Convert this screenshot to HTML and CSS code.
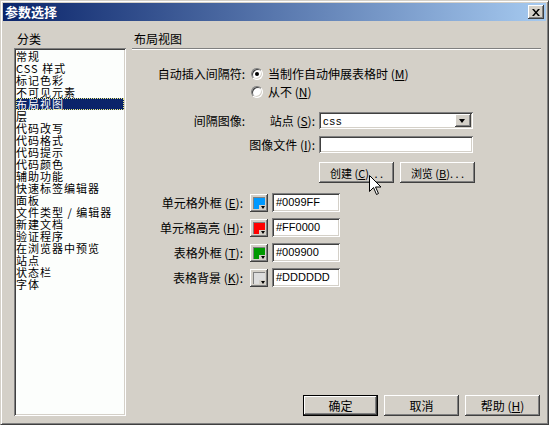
FILE: index.html
```html
<!DOCTYPE html>
<html lang="zh-CN">
<head>
  <meta charset="UTF-8">
  <title>参数选择</title>
  <link rel="stylesheet" href="styles.css">
</head>
<body>
  <div class="window">
    <div class="titlebar">
      <span class="title">参数选择</span>
      <span class="close">
        <svg width="8" height="7" viewBox="0 0 8 7"><path d="M0 0h2l2 2.5 2-2.5h2l-3 3.5 3 3.5h-2l-2-2.5-2 2.5h-2l3-3.5z" fill="#000"/></svg>
      </span>
    </div>

    <div class="body">
      <div class="category">
        <div class="cat-caption">分类</div>
        <ul class="list">
          <li>常规</li>
          <li>CSS 样式</li>
          <li>标记色彩</li>
          <li>不可见元素</li>
          <li class="selected">布局视图</li>
          <li>层</li>
          <li>代码改写</li>
          <li>代码格式</li>
          <li>代码提示</li>
          <li>代码颜色</li>
          <li>辅助功能</li>
          <li>快速标签编辑器</li>
          <li>面板</li>
          <li>文件类型 / 编辑器</li>
          <li>新建文档</li>
          <li>验证程序</li>
          <li>在浏览器中预览</li>
          <li>站点</li>
          <li>状态栏</li>
          <li>字体</li>
        </ul>
      </div>

      <div class="panel">
        <div class="panel-caption">布局视图</div>
        <div class="rule"></div>

        <div class="row row-first">
          <span class="label">自动插入间隔符:</span>
          <span class="radio checked"></span>
          <span>当制作自动伸展表格时 (<u>M</u>)</span>
        </div>
        <div class="row row-next">
          <span class="label"></span>
          <span class="radio"></span>
          <span>从不 (<u>N</u>)</span>
        </div>

        <div class="row row-site">
          <span class="label">间隔图像:</span>
          <span class="sublabel">站点 (<u>S</u>):</span>
          <div class="select field">
            <span class="value">css</span>
            <span class="drop"></span>
          </div>
        </div>
        <div class="row row-file">
          <span class="label label-wide">图像文件 (<u>I</u>):</span>
          <div class="text field"></div>
        </div>
        <div class="row row-buttons">
          <button class="btn btn-small">创建 (<u>C</u>). . .</button>
          <button class="btn btn-small">浏览 (<u>B</u>). . .</button>
          <svg class="cursor" width="12" height="20" viewBox="0 0 12 20"><path d="M0.5 0.5v16l4-4 3 7 2-1-3-6.5h5.5z" fill="#fff" stroke="#000"/></svg>
        </div>

        <div class="row color-row color-first">
          <span class="label label-color">单元格外框 (<u>E</u>):</span>
          <span class="swatch"><span class="chip" style="background:#0099ff"></span></span>
          <div class="hex field">#0099FF</div>
        </div>
        <div class="row color-row">
          <span class="label label-color">单元格高亮 (<u>H</u>):</span>
          <span class="swatch"><span class="chip" style="background:#ff0000"></span></span>
          <div class="hex field">#FF0000</div>
        </div>
        <div class="row color-row">
          <span class="label label-color">表格外框 (<u>T</u>):</span>
          <span class="swatch"><span class="chip" style="background:#009900"></span></span>
          <div class="hex field">#009900</div>
        </div>
        <div class="row color-row">
          <span class="label label-color">表格背景 (<u>K</u>):</span>
          <span class="swatch"><span class="chip" style="background:#dddddd"></span></span>
          <div class="hex field">#DDDDDD</div>
        </div>

        <div class="actions">
          <button class="btn btn-default">确定</button>
          <button class="btn">取消</button>
          <button class="btn">帮助 (<u>H</u>)</button>
        </div>
      </div>
    </div>
  </div>
</body>
</html>
```

FILE: styles.css
```css
* {
  box-sizing: border-box;
}
body {
  margin: 0;
  background-color: #d4d0c8;
  font-family: "Noto Sans CJK SC", sans-serif;
  font-size: 12px;
  line-height: 12px;
  color: #000;
}
u {
  text-decoration: underline;
}
.window {
  width: 549px;
  height: 425px;
  border: 1px solid;
  border-color: #d4d0c8 #404040 #404040 #d4d0c8;
  box-shadow: inset 1px 1px #fff, inset -1px -1px #808080;
  padding: 2px;
  display: flex;
  flex-direction: column;
}
.titlebar {
  height: 18px;
  flex: none;
  display: flex;
  align-items: center;
  padding: 0 2px;
  background: linear-gradient(to right, #0a246a, #a6caf0);
  color: #fff;
  font-weight: bold;
  font-size: 13px;
}
.title {
  flex: 1;
  line-height: 18px;
}
.close {
  width: 16px;
  height: 14px;
  display: flex;
  align-items: center;
  justify-content: center;
  background-color: #d4d0c8;
  box-shadow: inset -1px -1px #404040, inset 1px 1px #fff, inset -2px -2px #808080;
}
.body {
  flex: 1;
  display: flex;
  gap: 6px;
  padding: 12px 5px 6px 11px;
}

/* category list */
.category {
  width: 112px;
  flex: none;
  display: flex;
  flex-direction: column;
}
.cat-caption {
  height: 12px;
  padding-left: 3px;
  margin-bottom: 3px;
}
.list {
  flex: 1;
  margin: 0;
  padding: 2px;
  list-style: none;
  background-color: #fcfefc;
  box-shadow: inset 1px 1px #808080, inset -1px -1px #fff, inset 2px 2px #404040, inset -2px -2px #d4d0c8;
}
.list li {
  height: 12px;
  font-size: 11px;
  line-height: 12px;
  letter-spacing: 1px;
  white-space: nowrap;
}
.list li.selected {
  background-color: #0a246a;
  color: #fff;
  outline: 1px dotted #f0f080;
  outline-offset: -1px;
}

/* right panel */
.panel {
  flex: 1;
  display: flex;
  flex-direction: column;
}
.panel-caption {
  height: 12px;
  padding-left: 2px;
  margin-bottom: 3px;
}
.rule {
  height: 2px;
  border-top: 1px solid #808080;
  border-bottom: 1px solid #fff;
}
.row {
  display: flex;
  align-items: center;
  white-space: nowrap;
}
.label {
  width: 113px;
  flex: none;
  text-align: right;
  margin-right: 6px;
}
.label-wide {
  width: 183px;
  margin-right: 4px;
}
.label-color {
  width: 113px;
  padding-right: 2px;
  margin-right: 5px;
}
.sublabel {
  width: 64px;
  flex: none;
  text-align: right;
  margin-right: 4px;
}
.row-first {
  height: 12px;
  margin-top: 18px;
}
.row-next {
  height: 12px;
  margin-top: 6px;
}
.row-site {
  height: 17px;
  margin-top: 14px;
}
.row-file {
  height: 17px;
  margin-top: 7px;
}
.row-buttons {
  position: relative;
  margin-top: 9px;
  padding-left: 187px;
  gap: 6px;
}
.color-row {
  height: 19px;
  margin-top: 6px;
}
.color-first {
  margin-top: 10px;
}

.radio {
  width: 12px;
  height: 12px;
  flex: none;
  position: relative;
  margin-right: 5px;
  border-radius: 50%;
  background-color: #fff;
  border: 1px solid;
  border-color: #808080 #fff #fff #808080;
  box-shadow: inset 1px 1px #404040, inset -1px -1px #d4d0c8;
}
.radio.checked::after {
  content: "";
  position: absolute;
  left: 3px;
  top: 3px;
  width: 4px;
  height: 4px;
  border-radius: 50%;
  background-color: #000;
}

.field {
  background-color: #fff;
  box-shadow: inset 1px 1px #808080, inset -1px -1px #fff, inset 2px 2px #404040, inset -2px -2px #d4d0c8;
}
.select {
  width: 154px;
  height: 17px;
  display: flex;
  align-items: center;
  padding: 2px;
}
.select .value {
  flex: 1;
  padding-left: 2px;
  font-family: "Liberation Sans", sans-serif;
  font-size: 11px;
  letter-spacing: 1px;
}
.drop {
  width: 16px;
  height: 13px;
  position: relative;
  background-color: #d4d0c8;
  box-shadow: inset -1px -1px #404040, inset 1px 1px #fff, inset -2px -2px #808080;
}
.drop::after {
  content: "";
  position: absolute;
  left: 4px;
  top: 5px;
  border-left: 3.5px solid transparent;
  border-right: 3.5px solid transparent;
  border-top: 4px solid #000;
}
.text {
  width: 154px;
  height: 17px;
}
.hex {
  width: 68px;
  height: 19px;
  padding: 3px 0 0 4px;
  font-family: "Liberation Sans", sans-serif;
  font-size: 11px;
  line-height: 13px;
}

.swatch {
  width: 18px;
  height: 18px;
  flex: none;
  position: relative;
  margin-right: 4px;
  padding: 3px;
  background-color: #d4d0c8;
  box-shadow: inset -1px -1px #404040, inset 1px 1px #fff, inset -2px -2px #808080;
}
.chip {
  display: block;
  width: 12px;
  height: 12px;
  box-shadow: inset 1px 1px #808080;
}
.swatch::after {
  content: "";
  position: absolute;
  right: 2px;
  bottom: 2px;
  width: 7px;
  height: 5px;
  background-color: #d4d0c8;
}
.swatch::before {
  content: "";
  position: absolute;
  right: 3px;
  bottom: 3px;
  z-index: 1;
  border-left: 2.5px solid transparent;
  border-right: 2.5px solid transparent;
  border-top: 3px solid #000;
}

.btn {
  width: 75px;
  height: 21px;
  padding: 0;
  border: none;
  background-color: #d4d0c8;
  font-family: "Noto Sans CJK SC", sans-serif;
  font-size: 12px;
  line-height: 12px;
  color: #000;
  box-shadow: inset -1px -1px #404040, inset 1px 1px #fff, inset -2px -2px #808080, inset 2px 2px #d4d0c8;
}
.btn-small {
  font-size: 11px;
  white-space: nowrap;
}
.btn-default {
  border: 1px solid #000;
}
.cursor {
  position: absolute;
  left: 237px;
  top: 13px;
}
.actions {
  margin-top: auto;
  display: flex;
  justify-content: flex-end;
  gap: 6px;
  padding-right: 1px;
}
```
